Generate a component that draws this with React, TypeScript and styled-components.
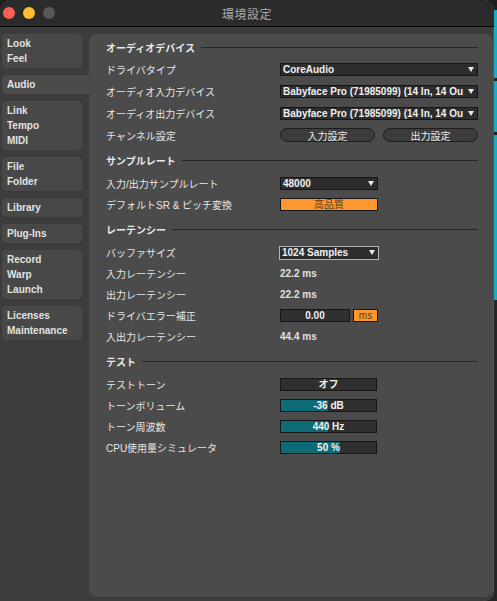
import React from "react";
import styled, { createGlobalStyle } from "styled-components";

const GlobalStyle = createGlobalStyle`
  html, body {
    margin: 0;
    padding: 0;
    height: 100%;
  }
  body {
    background: linear-gradient(
      to bottom,
      #1f1f1f 0 10px,
      #17adc4 10px 78px,
      #1f1f1f 78px 81px,
      #17adc4 81px 132px,
      #1f1f1f 132px 135px,
      #17adc4 135px 300px,
      #262626 300px
    );
    font-family: "Liberation Sans", "Noto Sans CJK JP", sans-serif;
    overflow: hidden;
  }
`;

const Window = styled.div`
  width: 494px;
  height: 601px;
  background: #3c3c3c;
  border-radius: 10px 10px 10px 0;
  box-shadow: inset -1px 0 0 #575757;
  display: flex;
  flex-direction: column;
  overflow: hidden;
`;

const TitleBar = styled.header`
  height: 26px;
  flex-shrink: 0;
  background: #2b2b2b;
  border-bottom: 1px solid #050505;
  display: grid;
  grid-template-columns: 1fr auto 1fr;
  align-items: center;
`;

const Lights = styled.div`
  display: flex;
  gap: 8px;
  padding-left: 3px;
`;

const Light = styled.span<{ $color: string }>`
  width: 12px;
  height: 12px;
  border-radius: 50%;
  background: ${(p) => p.$color};
`;

const Title = styled.div`
  font-family: "Noto Sans CJK JP", sans-serif;
  font-size: 12px;
  color: #a9a9a9;
  letter-spacing: 0.5px;
`;

const Body = styled.div`
  flex: 1;
  display: flex;
  padding: 7px 7px 4px 2px;
  min-height: 0;
`;

const Sidebar = styled.nav`
  width: 80px;
  flex-shrink: 0;
  display: flex;
  flex-direction: column;
  gap: 7px;
`;

const Tab = styled.div<{ $active?: boolean }>`
  background: ${(p) => (p.$active ? "#4b4b4b" : "#484848")};
  border-radius: ${(p) => (p.$active ? "4px 0 0 4px" : "4px")};
  margin-right: ${(p) => (p.$active ? "-7px" : "0")};
  padding: 2px 0 2px 5px;
  font-size: 10px;
  font-weight: bold;
  line-height: 15px;
  color: #e2e2e2;
`;

const Panel = styled.main`
  flex: 1;
  margin-left: 7px;
  background: #4b4b4b;
  border-radius: 8px;
  padding: 2px 15px 0 17px;
  display: flex;
  flex-direction: column;
  gap: 3px;
`;

const Section = styled.section`
  display: flex;
  flex-direction: column;
`;

const SectionHead = styled.div`
  height: 22px;
  display: flex;
  align-items: center;
  gap: 6px;
`;

const HeadText = styled.span`
  font-family: "Noto Sans CJK JP", sans-serif;
  font-size: 10px;
  font-weight: bold;
  color: #e8e8e8;
  white-space: nowrap;
`;

const HeadRule = styled.span`
  flex: 1;
  height: 1px;
  background: #262626;
`;

const Rows = styled.div<{ $dense?: boolean }>`
  display: flex;
  flex-direction: column;
  padding-top: ${(p) => (p.$dense ? "2px" : "0")};
`;

const Row = styled.div<{ $dense?: boolean }>`
  height: ${(p) => (p.$dense ? "21px" : "22px")};
  display: grid;
  grid-template-columns: 174px auto;
  align-items: center;
`;

const Label = styled.span`
  font-size: 10px;
  color: #e6e6e6;
  white-space: nowrap;
`;

const Controls = styled.div`
  display: flex;
  gap: 8px;
`;

const Select = styled.div<{ $w: number; $focus?: boolean }>`
  width: ${(p) => p.$w}px;
  height: ${(p) => (p.$focus ? "14px" : "13px")};
  margin-left: ${(p) => (p.$focus ? "-1px" : "0")};
  box-sizing: border-box;
  background: #2d2d2d;
  border: 1px solid ${(p) => (p.$focus ? "#b5b5b5" : "#161616")};
  display: flex;
  align-items: center;
  padding: 0 3px 0 2px;
  gap: 2px;
`;

const SelectText = styled.span`
  flex: 1;
  white-space: nowrap;
  font-size: 10px;
  font-weight: bold;
  color: #f0f0f0;
  line-height: 11px;
`;

const Arrow = styled.span`
  width: 0;
  height: 0;
  border-left: 3.5px solid transparent;
  border-right: 3.5px solid transparent;
  border-top: 5px solid #e8e8e8;
  flex-shrink: 0;
`;

const Pill = styled.div`
  width: 95px;
  height: 14px;
  box-sizing: border-box;
  border-radius: 7px;
  background: #3c3c3c;
  border: 1px solid #1e1e1e;
  display: flex;
  align-items: center;
  justify-content: center;
  font-family: "Noto Sans CJK JP", sans-serif;
  font-size: 10px;
  color: #ececec;
`;

const Field = styled.div<{ $w: number; $orange?: boolean }>`
  width: ${(p) => p.$w}px;
  height: 13px;
  box-sizing: border-box;
  background: ${(p) => (p.$orange ? "#fd9730" : "#2f2f2f")};
  border: 1px solid #171717;
  display: flex;
  align-items: center;
  justify-content: center;
  font-size: 10px;
  font-weight: ${(p) => (p.$orange ? "normal" : "bold")};
  color: ${(p) => (p.$orange ? "#5b3d18" : "#f0f0f0")};
  line-height: 11px;
`;

const Inline = styled.div`
  display: flex;
  gap: 3px;
`;

const Value = styled.span`
  font-size: 10px;
  font-weight: bold;
  color: #e0e0e0;
`;

const Meter = styled.div<{ $fill: number }>`
  width: 97px;
  height: 13px;
  box-sizing: border-box;
  border: 1px solid #171717;
  background: linear-gradient(
    to right,
    #0d6a77 ${(p) => p.$fill}%,
    #2f2f2f ${(p) => p.$fill}%
  );
  display: flex;
  align-items: center;
  justify-content: center;
  font-size: 10px;
  font-weight: bold;
  color: #f2f2f2;
  line-height: 11px;
`;

const tabs = [
  ["Look", "Feel"],
  ["Audio"],
  ["Link", "Tempo", "MIDI"],
  ["File", "Folder"],
  ["Library"],
  ["Plug-Ins"],
  ["Record", "Warp", "Launch"],
  ["Licenses", "Maintenance"],
];

const Dropdown = ({ w, text, focus }: { w: number; text: string; focus?: boolean }) => (
  <Select $w={w} $focus={focus}>
    <SelectText>{text}</SelectText>
    <Arrow />
  </Select>
);

export default function App() {
  return (
    <>
      <GlobalStyle />
      <Window>
        <TitleBar>
          <Lights>
            <Light $color="#fe5f57" />
            <Light $color="#febc2e" />
            <Light $color="#585858" />
          </Lights>
          <Title>環境設定</Title>
          <span />
        </TitleBar>
        <Body>
          <Sidebar>
            {tabs.map((lines) => (
              <Tab key={lines[0]} $active={lines[0] === "Audio"}>
                {lines.map((l) => (
                  <div key={l}>{l}</div>
                ))}
              </Tab>
            ))}
          </Sidebar>
          <Panel>
            <Section>
              <SectionHead>
                <HeadText>オーディオデバイス</HeadText>
                <HeadRule />
              </SectionHead>
              <Rows>
                <Row>
                  <Label>ドライバタイプ</Label>
                  <Dropdown w={198} text="CoreAudio" />
                </Row>
                <Row>
                  <Label>オーディオ入力デバイス</Label>
                  <Dropdown w={198} text="Babyface Pro (71985099) (14 In, 14 Ou" />
                </Row>
                <Row>
                  <Label>オーディオ出力デバイス</Label>
                  <Dropdown w={198} text="Babyface Pro (71985099) (14 In, 14 Ou" />
                </Row>
                <Row>
                  <Label>チャンネル設定</Label>
                  <Controls>
                    <Pill>入力設定</Pill>
                    <Pill>出力設定</Pill>
                  </Controls>
                </Row>
              </Rows>
            </Section>

            <Section>
              <SectionHead>
                <HeadText>サンプルレート</HeadText>
                <HeadRule />
              </SectionHead>
              <Rows $dense>
                <Row $dense>
                  <Label>入力/出力サンプルレート</Label>
                  <Dropdown w={98} text="48000" />
                </Row>
                <Row $dense>
                  <Label>デフォルトSR &amp; ピッチ変換</Label>
                  <Field $w={98} $orange>
                    高品質
                  </Field>
                </Row>
              </Rows>
            </Section>

            <Section>
              <SectionHead>
                <HeadText>レーテンシー</HeadText>
                <HeadRule />
              </SectionHead>
              <Rows $dense>
                <Row $dense>
                  <Label>バッファサイズ</Label>
                  <Dropdown w={100} text="1024 Samples" focus />
                </Row>
                <Row $dense>
                  <Label>入力レーテンシー</Label>
                  <Value>22.2 ms</Value>
                </Row>
                <Row $dense>
                  <Label>出力レーテンシー</Label>
                  <Value>22.2 ms</Value>
                </Row>
                <Row $dense>
                  <Label>ドライバエラー補正</Label>
                  <Inline>
                    <Field $w={70}>0.00</Field>
                    <Field $w={25} $orange>
                      ms
                    </Field>
                  </Inline>
                </Row>
                <Row $dense>
                  <Label>入出力レーテンシー</Label>
                  <Value>44.4 ms</Value>
                </Row>
              </Rows>
            </Section>

            <Section>
              <SectionHead>
                <HeadText>テスト</HeadText>
                <HeadRule />
              </SectionHead>
              <Rows $dense>
                <Row $dense>
                  <Label>テストトーン</Label>
                  <Field $w={97}>オフ</Field>
                </Row>
                <Row $dense>
                  <Label>トーンボリューム</Label>
                  <Meter $fill={49}>-36 dB</Meter>
                </Row>
                <Row $dense>
                  <Label>トーン周波数</Label>
                  <Meter $fill={50}>440 Hz</Meter>
                </Row>
                <Row $dense>
                  <Label>CPU使用量シミュレータ</Label>
                  <Meter $fill={62}>50 %</Meter>
                </Row>
              </Rows>
            </Section>
          </Panel>
        </Body>
      </Window>
    </>
  );
}
